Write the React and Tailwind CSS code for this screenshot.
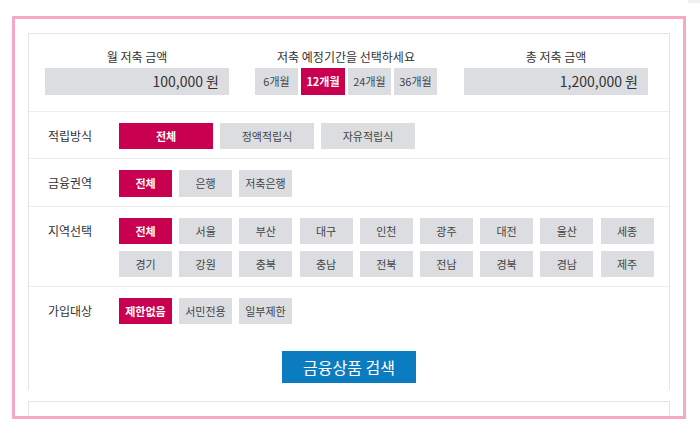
import React from "react";

const FONT = { fontFamily: '"Noto Sans CJK KR", "Noto Sans", sans-serif' };

function Btn({ label, active, w = "w-[53px]", h = "h-[26px]" }) {
  return (
    <div
      className={`${w} ${h} flex items-center justify-center text-[11px] leading-none ${
        active ? "bg-[#c8004f] text-white font-bold" : "bg-[#dcdde0] text-[#444]"
      }`}
    >
      {label}
    </div>
  );
}

function Row({ label, children, pb = "pb-[9px]", border = true }) {
  return (
    <div className={`flex items-start pl-[19px] pt-[11px] ${pb} ${border ? "border-b border-[#ececec]" : ""}`}>
      <div className="w-[71px] h-[26px] flex items-center text-[12px] text-[#333]">{label}</div>
      {children}
    </div>
  );
}

export default function App() {
  const regions = ["전체", "서울", "부산", "대구", "인천", "광주", "대전", "울산", "세종", "경기", "강원", "충북", "충남", "전북", "전남", "경북", "경남", "제주"];
  return (
    <div className="w-[700px] h-[434px] bg-white" style={FONT}>
      <div className="absolute right-0 top-0 w-[12px] h-[3px] bg-[#f0f0f0]" />
      <div className="ml-[12px] mt-[16px] w-[674px] h-[403px] border-[3px] border-[#f7a8c6] px-[13px] pt-[14px] overflow-hidden">
        <div className="border-x border-t border-[#e4e4e4]">
          {/* amounts row */}
          <div className="flex pl-[16px] pt-[15px] pb-[16px] border-b border-[#ececec]">
            <div className="w-[184px] flex flex-col items-center">
              <div className="h-[16px] leading-[16px] text-[12px] text-[#333] mb-[3px]">월 저축 금액</div>
              <div className="w-full h-[27px] bg-[#dcdde0] flex items-center justify-end pr-[10px] text-[14px] text-[#333]">100,000 원</div>
            </div>
            <div className="w-[182px] ml-[26px] flex flex-col items-center">
              <div className="h-[16px] leading-[16px] text-[12px] text-[#333] mb-[3px] whitespace-nowrap">저축 예정기간을 선택하세요</div>
              <div className="flex gap-[3px]">
                <Btn label="6개월" w="w-[43px]" h="h-[27px]" />
                <Btn label="12개월" active w="w-[44px]" h="h-[27px]" />
                <Btn label="24개월" w="w-[43px]" h="h-[27px]" />
                <Btn label="36개월" w="w-[43px]" h="h-[27px]" />
              </div>
            </div>
            <div className="w-[184px] ml-[27px] flex flex-col items-center">
              <div className="h-[16px] leading-[16px] text-[12px] text-[#333] mb-[3px]">총 저축 금액</div>
              <div className="w-full h-[27px] bg-[#dcdde0] flex items-center justify-end pr-[10px] text-[14px] text-[#333]">1,200,000 원</div>
            </div>
          </div>

          <Row label="적립방식">
            <div className="flex gap-[7px]">
              <Btn label="전체" active w="w-[94px]" />
              <Btn label="정액적립식" w="w-[94px]" />
              <Btn label="자유적립식" w="w-[94px]" />
            </div>
          </Row>

          <Row label="금융권역">
            <div className="flex gap-[7px]">
              <Btn label="전체" active h="h-[27px]" />
              <Btn label="은행" h="h-[27px]" />
              <Btn label="저축은행" h="h-[27px]" />
            </div>
          </Row>

          <Row label="지역선택">
            <div className="grid grid-cols-[repeat(9,53px)] gap-x-[7.2px] gap-y-[7px]">
              {regions.map((r, i) => (
                <Btn key={i} label={r} active={i === 0} />
              ))}
            </div>
          </Row>

          <Row label="가입대상" pb="pb-0" border={false}>
            <div className="flex gap-[7px]">
              <Btn label="제한없음" active />
              <Btn label="서민전용" />
              <Btn label="일부제한" />
            </div>
          </Row>

          <div className="flex justify-center pt-[27px] pb-[7px]">
            <div className="w-[134px] h-[32px] bg-[#0b7cc0] text-white text-[16px] flex items-center justify-center">
              금융상품 검색
            </div>
          </div>
        </div>
        <div className="mt-[11px] h-[20px] border-x border-t border-[#e4e4e4]" />
      </div>
    </div>
  );
}
